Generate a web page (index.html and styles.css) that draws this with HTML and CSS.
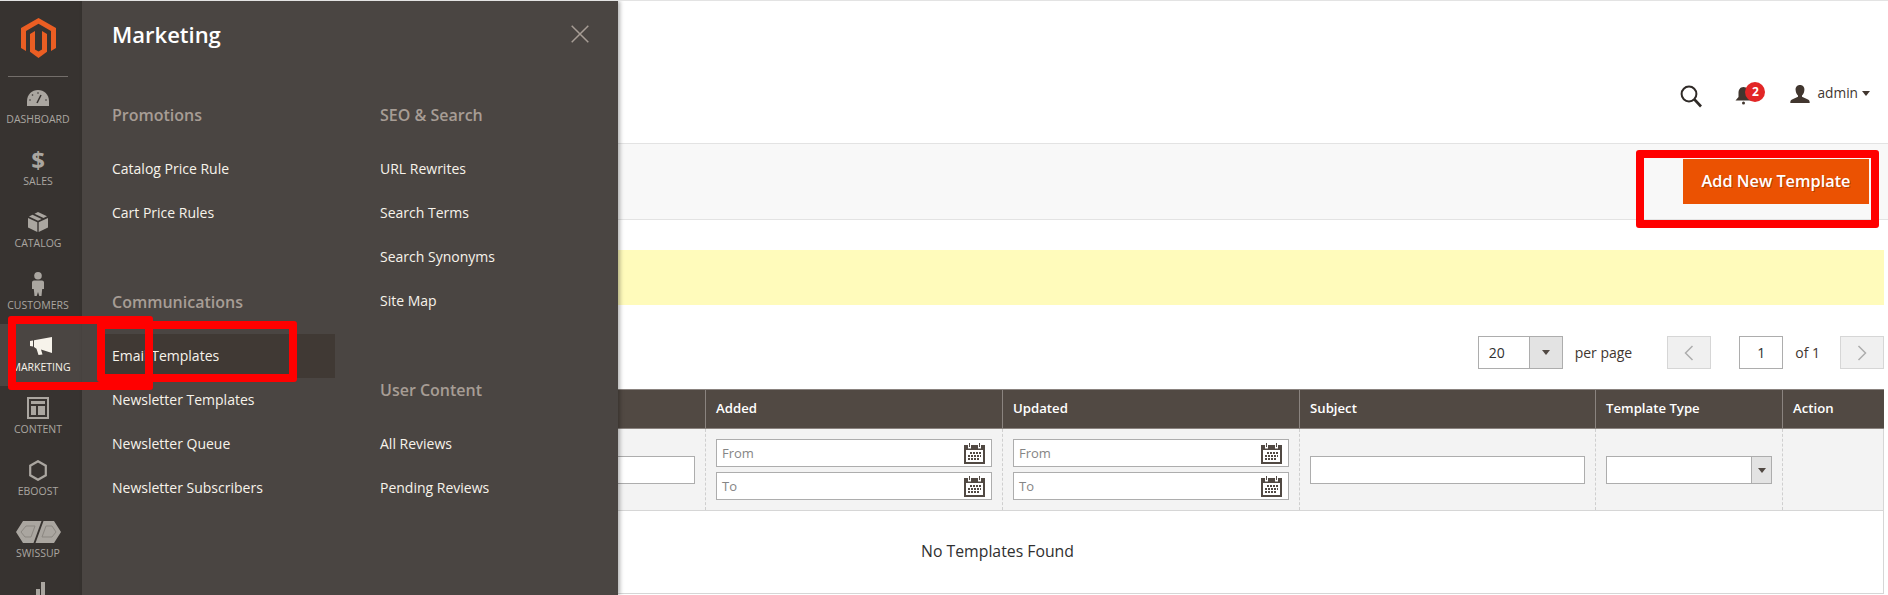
FILE: index.html
```html
<!DOCTYPE html>
<html lang="en">
<head>
<meta charset="utf-8">
<title>Email Templates</title>
<link rel="stylesheet" href="styles.css">
</head>
<body>
<svg class="defs" width="0" height="0" aria-hidden="true">
  <symbol id="cal" viewBox="0 0 21 21">
    <path d="M0 2h21v19H0z" fill="#514943"/>
    <path d="M2 7h17v12H2z" fill="#fff"/>
    <path d="M4 .5h3v5H4zM14 .5h3v5h-3z" fill="#fff"/>
    <path d="M5 0h1v4H5zM15 0h1v4h-1z" fill="#514943"/>
    <path d="M6 9h2v2H6zM9 9h2v2H9zM12 9h2v2h-2zM15 9h2v2h-2zM4 12h2v2H4zM7 12h2v2H7zM10 12h2v2h-2zM13 12h2v2h-2zM16 12h1v2h-1zM4 15h2v2H4zM7 15h2v2H7zM10 15h2v2h-2zM13 15h2v2h-2z" fill="#514943"/>
  </symbol>
</svg>

<div class="page">
  <header class="topbar">
    <svg class="ic-search" width="23" height="23" viewBox="0 0 23 23"><circle cx="9" cy="9" r="7.4" fill="none" stroke="#2f2a27" stroke-width="2"/><path d="M14.5 14.5l6.5 7" fill="none" stroke="#2f2a27" stroke-width="2.6"/></svg>
    <div class="bell">
      <svg width="17" height="22" viewBox="0 0 17 22"><path d="M8.500 2c3.500 0 5 3 5 6v4l3 3.500H0.500l3-3.500V8c0-3 1.500-6 5-6z" fill="#41362f"/><circle cx="8.500" cy="18" r="1.500" fill="#41362f"/></svg>
      <span class="badge">2</span>
    </div>
    <svg class="ic-user" width="20" height="18" viewBox="0 0 20 18"><path d="M10 0c3 0 4.600 2.200 4.400 5-.2 2.400-1.100 4.400-2.400 5.400v1.400l6 2.700c1 .5 1.700 1.200 1.700 3.500H.3c0-2.300.7-3 1.700-3.500l6-2.700v-1.400C6.700 9.400 5.800 7.400 5.600 5 5.400 2.200 7 0 10 0z" fill="#41362f"/></svg>
    <span class="admin">admin</span>
    <span class="caret"></span>
  </header>

  <div class="actions">
    <button class="primary">Add New Template</button>
  </div>

  <div class="notice"></div>

  <div class="pager">
    <div class="select">
      <span class="select-val">20</span>
      <span class="select-btn"><i class="tri"></i></span>
    </div>
    <span class="per">per page</span>
    <span class="nav-btn prev"><svg width="10" height="16" viewBox="0 0 10 16"><path d="M8.500 1L1.500 8l7 7" fill="none" stroke="#adadad" stroke-width="1.500"/></svg></span>
    <span class="page-input">1</span>
    <span class="of">of 1</span>
    <span class="nav-btn next"><svg width="10" height="16" viewBox="0 0 10 16"><path d="M1.500 1l7 7-7 7" fill="none" stroke="#adadad" stroke-width="1.500"/></svg></span>
  </div>

  <div class="grid">
    <div class="row head">
      <div class="th"></div>
      <div class="th">Added</div>
      <div class="th">Updated</div>
      <div class="th">Subject</div>
      <div class="th">Template Type</div>
      <div class="th">Action</div>
    </div>
    <div class="row filters">
      <div class="td"><span class="field"></span></div>
      <div class="td">
        <div class="date"><span>From</span><svg width="21" height="21"><use href="#cal"/></svg></div>
        <div class="date"><span>To</span><svg width="21" height="21"><use href="#cal"/></svg></div>
      </div>
      <div class="td">
        <div class="date"><span>From</span><svg width="21" height="21"><use href="#cal"/></svg></div>
        <div class="date"><span>To</span><svg width="21" height="21"><use href="#cal"/></svg></div>
      </div>
      <div class="td"><span class="field"></span></div>
      <div class="td"><div class="field field-select"><span class="select-btn"><i class="tri"></i></span></div></div>
      <div class="td"></div>
    </div>
    <div class="empty">No Templates Found</div>
  </div>
</div>

<nav class="side">
  <div class="logo">
    <svg width="35" height="40" viewBox="0 0 35 40"><path d="M17.500 0L35 10v20l-5 3V13L17.500 5.800 5 13v20l-5-3V10z" fill="#eb5e23"/><path d="M21 31.500l-3.500 2-3.500-2V13l-5 2.900V33.800L17.500 40l8.500-6.200V15.900L21 13z" fill="#eb5e23"/></svg>
  </div>
  <a class="item">
    <span class="icon"><svg width="22" height="16" viewBox="0 0 22 16"><path d="M0 16v-5C0 4.500 5 0 11 0s11 4.500 11 11v5z" fill="#aaa6a0"/><path d="M10 13l4-8" stroke="#373330" stroke-width="1.500"/><circle cx="11" cy="3" r=".8" fill="#373330"/><circle cx="5.500" cy="5" r=".8" fill="#373330"/><circle cx="3" cy="10" r=".8" fill="#373330"/><circle cx="19" cy="10" r=".8" fill="#373330"/></svg></span>
    <span class="label">Dashboard</span>
  </a>
  <a class="item">
    <span class="icon dollar">$</span>
    <span class="label">Sales</span>
  </a>
  <a class="item">
    <span class="icon"><svg width="20" height="20" viewBox="0 0 20 20"><path d="M10 0l9 4.200-3.500 1.800-9-4.300zM4.500 2.800l9 4.300L10 8.800 1 4.600zM0 6l9.300 4.300V20L0 15.500zM20 6v9.500L10.700 20v-9.700z" fill="#aaa6a0"/></svg></span>
    <span class="label">Catalog</span>
  </a>
  <a class="item">
    <span class="icon"><svg width="12" height="24" viewBox="0 0 12 24"><circle cx="6" cy="3.800" r="3.800" fill="#aaa6a0"/><path d="M2 8.500h8c1 0 2 .8 2 2V17h-1.800l-.7 7H7.300L6 20l-1.300 4H2.500l-.7-7H0v-6.500c0-1.200 1-2 2-2z" fill="#aaa6a0"/></svg></span>
    <span class="label">Customers</span>
  </a>
  <a class="item active">
    <span class="icon"><svg width="22" height="18" viewBox="0 0 22 18"><path d="M0 4l3-.5v6L0 9zM4 3.300L22 0v16l-11-3.500 1.500 5-4 .5-2-6.200L4 10z" fill="#f7f3eb"/></svg></span>
    <span class="label">Marketing</span>
  </a>
  <a class="item">
    <span class="icon"><svg width="22" height="22" viewBox="0 0 22 22"><path fill-rule="evenodd" d="M0 0h22v22H0zM2 2v18h18V2z" fill="#aaa6a0"/><path d="M4 4h14v3H4zM4 9h5v9H4zM11 9h7v9h-7z" fill="#aaa6a0"/></svg></span>
    <span class="label">Content</span>
  </a>
  <a class="item">
    <span class="icon"><svg width="18" height="21" viewBox="0 0 18 21"><path d="M9 1.200l7.800 4.500v9.600L9 19.800 1.200 15.300V5.700z" fill="none" stroke="#aaa6a0" stroke-width="2.200"/></svg></span>
    <span class="label">eBoost</span>
  </a>
  <a class="item">
    <span class="icon"><svg width="45" height="22" viewBox="0 0 45 22"><path d="M7 0H25.500L17.500 22H7L0 11zM27.500 0H38l7 11-7 11H19.500z" fill="#aaa6a0"/><path d="M5 11l5-6h9L15 16H9zM26 16l4-11h6l4 6-4 5z" fill="none" stroke="#8b8781" stroke-width="1"/></svg></span>
    <span class="label">Swissup</span>
  </a>
  <a class="item">
    <span class="icon"><svg width="14" height="24" viewBox="0 0 14 24"><path d="M0 14h4v10H0zM5 7h4v17H5zM10 0h4v24h-4z" fill="#aaa6a0"/></svg></span>
  </a>
</nav>

<aside class="panel">
  <h2 class="panel-title">Marketing</h2>
  <svg class="close" width="18" height="18" viewBox="0 0 18 18"><path d="M.7.7l16.600 16.600M17.300.7L.7 17.300" stroke="#a79d95" stroke-width="1.500" fill="none"/></svg>
  <div class="cols">
    <div class="col">
      <h3>Promotions</h3>
      <a>Catalog Price Rule</a>
      <a>Cart Price Rules</a>
      <h3 class="next-group">Communications</h3>
      <a class="current">Email Templates</a>
      <a>Newsletter Templates</a>
      <a>Newsletter Queue</a>
      <a>Newsletter Subscribers</a>
    </div>
    <div class="col">
      <h3>SEO &amp; Search</h3>
      <a>URL Rewrites</a>
      <a>Search Terms</a>
      <a>Search Synonyms</a>
      <a>Site Map</a>
      <h3 class="next-group">User Content</h3>
      <a>All Reviews</a>
      <a>Pending Reviews</a>
    </div>
  </div>
</aside>

<div class="mark mark-nav"></div>
<div class="mark mark-link"></div>
<div class="mark mark-btn"></div>
</body>
</html>
```
FILE: styles.css
```css
* { box-sizing: border-box; }
html, body { margin: 0; height: 595px; overflow: hidden; }
body {
  position: relative;
  font-family: "Open Sans", sans-serif;
  color: #41362f;
  background: #fff;
  border-top: 1px solid #e3e3e3;
}
.defs { position: absolute; }
.page { display: flex; flex-direction: column; }

.topbar {
  height: 142px;
  display: flex;
  justify-content: flex-end;
  align-items: flex-start;
  padding: 83px 18px 0 0;
}
.ic-search { margin-top: 1px; }
.bell { position: relative; width: 30px; height: 24px; margin-left: 32px; }
.bell svg { position: absolute; left: 0; top: 1px; }
.badge {
  position: absolute; left: 10px; top: -2px;
  width: 20px; height: 20px; border-radius: 50%;
  background: #e22626; color: #fff;
  font-size: 12px; font-weight: 700; line-height: 20px; text-align: center;
}
.ic-user { margin: 1px 0 0 25px; }
.admin { margin-left: 7px; font-size: 13.700px; line-height: 18px; color: #41362f; }
.caret {
  margin: 7px 0 0 4px;
  border-left: 4px solid transparent; border-right: 4px solid transparent;
  border-top: 5px solid #41362f;
}

.actions {
  height: 77px;
  background: #f8f8f8;
  border-top: 1px solid #e3e3e3;
  border-bottom: 1px solid #e3e3e3;
  padding: 15px 19px 0 0;
  display: flex;
  justify-content: flex-end;
  align-items: flex-start;
}
.primary {
  width: 186px; height: 45px;
  border: 0;
  background: #eb5202;
  color: #fff;
  font: 600 16.300px "Open Sans", sans-serif;
  text-shadow: 1px 1px 0 rgba(0, 0, 0, .25);
  padding: 0 0 2px;
}

.notice {
  height: 55px;
  margin: 30px 4px 0 110px;
  background: #fffbbb;
}

.pager {
  margin: 31px 4px 0 110px;
  height: 33px;
  display: flex;
  justify-content: flex-end;
  align-items: center;
  font-size: 14px;
  color: #41362f;
}
.select {
  width: 85px; height: 33px;
  display: flex;
  border: 1px solid #adadad;
  background: #fff;
}
.select-val { flex: 1; padding-left: 10px; line-height: 31px; color: #303030; }
.select-btn {
  display: flex; align-items: center; justify-content: center;
  background: #e3e3e3;
  border-left: 1px solid #adadad;
}
.select .select-btn { width: 33px; }
.tri {
  border-left: 4px solid transparent; border-right: 4px solid transparent;
  border-top: 5px solid #514943;
}
.per { margin: 0 35px 0 12px; }
.nav-btn {
  width: 44px; height: 33px;
  display: flex; align-items: center; justify-content: center;
  background: #f0f0f0;
  border: 1px solid #d6d6d6;
}
.page-input {
  width: 44px; height: 33px; margin-left: 28px;
  border: 1px solid #adadad;
  text-align: center; line-height: 31px; color: #303030;
}
.of { margin: 0 20px 0 12px; }

.grid { margin: 20px 4px 0 110px; }
.row {
  display: grid;
  grid-template-columns: 595px 297px 297px 296px 187px 102px;
}
.head { height: 40px; background: #514943; border-top: 1px solid #8a837f; border-bottom: 1px solid #8a837f; }
.th {
  padding: 0 10px;
  border-left: 1px solid #8a837f;
  color: #fff;
  font-size: 13.200px;
  font-weight: 600;
  line-height: 37px;
}
.filters { height: 82px; background: #f3f3f3; border-bottom: 1px solid #d6d6d6; }
.td { padding: 10px 10px 0; border-left: 1px dashed #cfcfcf; }
.td:last-child { border-right: 1px solid #d6d6d6; }
.date {
  height: 28px; margin-bottom: 5px;
  display: flex; align-items: center; justify-content: space-between;
  padding: 0 6px 0 5px;
  background: #fff;
  border: 1px solid #adadad;
  font-size: 13px;
  color: #858585;
}
.date svg { flex: none; }
.field {
  display: block; height: 28px; margin-top: 17px;
  background: #fff;
  border: 1px solid #adadad;
}
.field-select { display: flex; justify-content: flex-end; }
.field-select .select-btn { width: 20px; }
.empty {
  height: 83px;
  padding-left: 2px;
  text-align: center;
  line-height: 81px;
  font-size: 15.800px;
  color: #303030;
  border-bottom: 1px solid #d6d6d6;
  border-right: 1px solid #d6d6d6;
}

.side {
  position: absolute; left: 0; top: 0;
  width: 82px; height: 594px;
  background: #373330;
  overflow: hidden;
  display: flex; flex-direction: column; align-items: stretch;
}
.logo {
  flex: none;
  height: 76px;
  margin: 0 14px 0 8px;
  padding: 17px 0 0 13px;
  border-bottom: 1px solid #736e6a;
  margin-bottom: -1px;
}
.logo svg { display: block; }
.item {
  flex: none;
  height: 62px;
  display: flex; flex-direction: column; align-items: center;
  padding-top: 8px;
  color: #aaa6a0;
  padding-right: 6px;
}
.item.active { background: #4a4542; color: #f7f3eb; padding-right: 0; }
.icon { height: 28px; display: flex; align-items: center; justify-content: center; }
.dollar { font-size: 24px; font-weight: 700; line-height: 28px; }
.label {
  margin-top: 0;
  font-size: 10.500px;
  line-height: 14px;
  text-transform: uppercase;
}

.panel {
  position: absolute; left: 82px; top: 0;
  width: 536px; height: 594px;
  background: #4a4542;
  box-shadow: 2px 0 4px rgba(0, 0, 0, .3);
  padding: 13px 0 0 30px;
  color: #f7f3eb;
}
.panel-title { margin: 0 0 39px; font-size: 22px; font-weight: 600; line-height: 40px; color: #fff; }
.close { position: absolute; right: 29px; top: 24px; }
.cols { display: flex; }
.col { flex: none; width: 268px; display: flex; flex-direction: column; }
.col h3 {
  margin: 0 0 10px;
  font-size: 16px; font-weight: 600; line-height: 44px;
  color: #a79d95;
}
.col h3.next-group { margin-top: 45px; }
.col a { height: 44px; line-height: 44px; font-size: 14px; color: #f7f3eb; }
.col a.current { margin: 0 45px 0 -12px; padding-left: 12px; background: #403934; }

.mark { position: absolute; border: 8px solid #f00; border-radius: 3px; }
.mark-nav { left: 8px; top: 315px; width: 145px; height: 74px; }
.mark-link { left: 97px; top: 320px; width: 200px; height: 61px; }
.mark-btn { left: 1636px; top: 149px; width: 243px; height: 78px; }
```
